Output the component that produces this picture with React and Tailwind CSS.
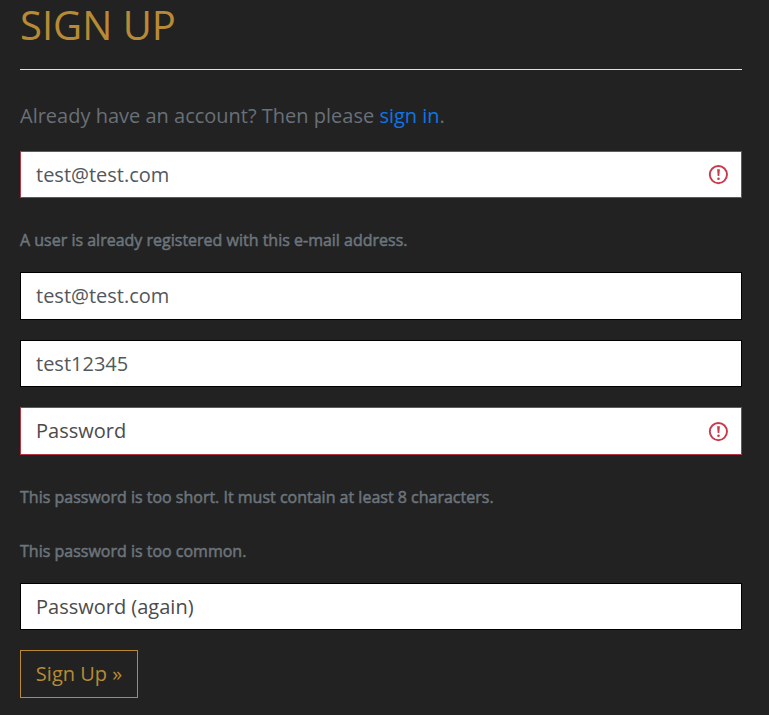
import React from "react";

function ErrorIcon({ className }) {
  return (
    <svg className={`size-5 shrink-0 ${className}`} viewBox="0 0 20 20" fill="none" stroke="#c93a4b" strokeWidth="1.9">
      <circle cx="10.4" cy="9.6" r="8.6" />
      <path d="M9.1 4.2h2.8l-.6 6.8H9.7z" fill="#c93a4b" stroke="none" />
      <circle cx="10.5" cy="13.7" r="1.3" fill="#c93a4b" stroke="none" />
    </svg>
  );
}

function Field({ text, invalid, className, iconClass = "" }) {
  return (
    <div className={`flex items-center justify-between border bg-white pl-[15px] pr-[13px] text-[20px] ${invalid ? "border-[#b23645]" : "border-black"} ${className}`}>
      <span>{text}</span>
      {invalid && <ErrorIcon className={iconClass} />}
    </div>
  );
}

function Note({ children, className }) {
  return <p className={`text-[16px] leading-6 font-normal text-[#6c757d] [-webkit-text-stroke:0.5px_#6c757d] ${className}`}>{children}</p>;
}

export default function App() {
  return (
    <main className="h-[715px] bg-[#222222] pl-5 pr-[27px] font-['Open_Sans',sans-serif] font-normal">
      <h1 className="h-[69px] text-[40px] leading-[50px] text-[#b88a35]">SIGN UP</h1>
      <hr className="border-[#e0e0e0]" />
      <p className="mt-[31px] h-[50px] text-[20px] leading-[30px] text-[#697077]">
        Already have an account? Then please <a className="text-[#0b76e8]">sign in</a>.
      </p>
      <Field text="test@test.com" invalid className="h-[47px] text-[#52585e]" />
      <Note className="mt-[30px]">A user is already registered with this e-mail address.</Note>
      <Field text="test@test.com" className="mt-5 h-12 text-[#52585e]" />
      <Field text="test12345" className="mt-5 h-[47px] text-[#52585e]" />
      <Field text="Password" invalid className="mt-5 h-12 text-[#4b4b4b]" iconClass="mt-px" />
      <Note className="mt-[30px]">This password is too short. It must contain at least 8 characters.</Note>
      <Note className="mt-[30px]">This password is too common.</Note>
      <Field text="Password (again)" className="mt-5 h-[47px] text-[#4b4b4b]" />
      <button className="mt-5 h-12 w-[118px] border border-[#b88a35] text-[20px] text-[#b88a35]">Sign Up »</button>
    </main>
  );
}
